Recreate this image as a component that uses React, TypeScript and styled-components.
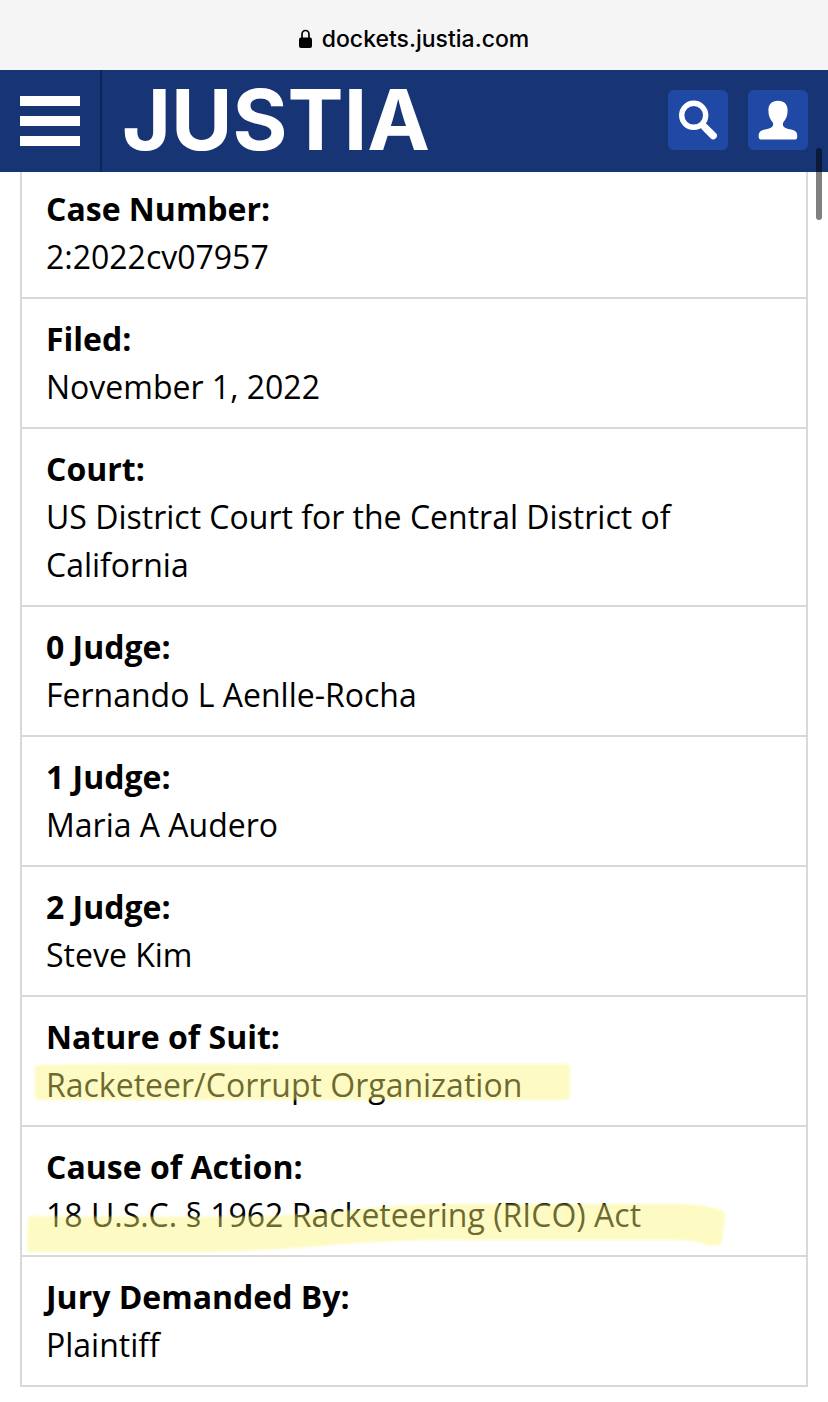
import React from "react";
import styled, { createGlobalStyle } from "styled-components";

const GlobalStyle = createGlobalStyle`
  *, *::before, *::after { box-sizing: border-box; }
  body {
    margin: 0;
    background: #fff;
    color: #000;
    font-family: "Open Sans", "Noto Sans", sans-serif;
  }
`;

const AddressBar = styled.div`
  display: flex;
  align-items: center;
  justify-content: center;
  gap: 10px;
  height: 70px;
  padding-top: 8px;
  background: #f5f5f6;
  font: 500 23px/32px Inter, "Liberation Sans", sans-serif;
`;

const Header = styled.header`
  display: flex;
  align-items: flex-start;
  height: 102px;
  background: #173475;
  color: #fff;
`;

const MenuButton = styled.button`
  display: flex;
  flex-direction: column;
  justify-content: center;
  gap: 10px;
  width: 102px;
  height: 100%;
  padding: 0 20px;
  border: 0;
  border-right: 2px solid #0f2555;
  background: none;
`;

const MenuBar = styled.span`
  display: block;
  height: 10px;
  background: #fff;
`;

const Logo = styled.a`
  margin-left: 20px;
  color: #fff;
  font: 700 84px/100px Inter, "Liberation Sans", sans-serif;
  text-decoration: none;
`;

const Actions = styled.div`
  display: flex;
  gap: 20px;
  margin-left: auto;
  padding: 20px 20px 0 0;
`;

const IconButton = styled.button`
  width: 60px;
  height: 60px;
  padding: 0;
  border: 0;
  border-radius: 6px;
  background: #2049a5;
  color: #fff;

  svg { display: block; }
`;

const CaseDetails = styled.dl`
  margin: 0 20px 15px;
  border: 2px solid #d9d9d9;
  border-top: 0;
`;

const Detail = styled.div`
  padding: 16px 24px;
  font-size: 32px;
  line-height: 48px;

  &:first-child { padding-top: 13px; }
  & + & { border-top: 2px solid #d9d9d9; }
`;

const Label = styled.dt`
  font-weight: 700;
`;

const Value = styled.dd`
  position: relative;
  margin: 0;
`;

const Highlight = styled.svg`
  position: absolute;
  left: -24px;
  top: 2px;
  overflow: visible;
  fill: rgba(251, 246, 116, 0.43);
  filter: blur(1px);
  pointer-events: none;
`;

const ScrollThumb = styled.div`
  position: absolute;
  top: 148px;
  right: 6px;
  width: 6px;
  height: 72px;
  border-radius: 3px;
  background: rgba(0, 0, 0, 0.5);
`;

/* Marker strokes, drawn from the inner left edge of the row. */
const suitStroke = "M15 2Q100 0 250 1H543Q548 1 548 6V32Q548 37 543 37H17Q13 37 13 33V6Q13 2 15 2Z";
const causeStroke =
  "M9 23Q160 24 230 23Q300 21 345 15Q390 11 430 11H660Q688 12 701 18Q704 20 703 26L700 48Q699 53 694 53Q686 53 675 49Q665 47 650 47H420Q350 48 300 53Q240 58 180 59H10Q4 60 5 54L6 27Q6 23 9 23Z";

const details: { label: string; value: string; stroke?: string }[] = [
  { label: "Case Number:", value: "2:2022cv07957" },
  { label: "Filed:", value: "November 1, 2022" },
  { label: "Court:", value: "US District Court for the Central District of California" },
  { label: "0 Judge:", value: "Fernando L Aenlle-Rocha" },
  { label: "1 Judge:", value: "Maria A Audero" },
  { label: "2 Judge:", value: "Steve Kim" },
  { label: "Nature of Suit:", value: "Racketeer/Corrupt Organization", stroke: suitStroke },
  { label: "Cause of Action:", value: "18 U.S.C. § 1962 Racketeering (RICO) Act", stroke: causeStroke },
  { label: "Jury Demanded By:", value: "Plaintiff" },
];

const LockIcon = () => (
  <svg width="13" height="20" viewBox="0 0 13 20" aria-hidden="true">
    <path d="M3 9V5.5a3.5 4 0 0 1 7 0V9" fill="none" stroke="#000" strokeWidth="1.7" />
    <rect x="0" y="8.5" width="13" height="10.5" rx="2" />
  </svg>
);

const SearchIcon = () => (
  <svg width="60" height="60" viewBox="0 0 60 60" fill="none" stroke="currentColor" aria-hidden="true">
    <circle cx="25.7" cy="25.3" r="12" strokeWidth="5.4" />
    <path d="M34 34.5L37 37.5" strokeWidth="5" />
    <path d="M37 37.5L45.2 45.7" strokeWidth="7.4" strokeLinecap="round" />
  </svg>
);

const UserIcon = () => (
  <svg width="60" height="60" viewBox="0 0 60 60" fill="currentColor" aria-hidden="true">
    <path d="M30 10.8C23.8 10.8 20.4 14.5 20.4 20.3C20.4 25.5 21.8 29.2 24.8 32.4C25.7 34.8 24.8 36.8 22.3 37.9C19 39.4 14.4 39.4 12.2 41.4C10.8 42.8 10.5 44.8 10.7 47.2C10.8 48.9 11.8 49.6 13.4 49.6H46.6C48.2 49.6 49.1 48.9 49.2 47.2C49.4 44.8 49.1 42.8 47.7 41.4C45.4 39.4 41 39.4 37.6 37.9C35.1 36.8 34.3 34.8 35.2 32.4C38.2 29.2 39.6 25.5 39.6 20.3C39.6 14.5 36.2 10.8 30 10.8Z" />
  </svg>
);

export default function App() {
  return (
    <>
      <GlobalStyle />
      <AddressBar>
        <LockIcon />
        <span>dockets.justia.com</span>
      </AddressBar>
      <Header>
        <MenuButton aria-label="Menu">
          <MenuBar />
          <MenuBar />
          <MenuBar />
        </MenuButton>
        <Logo href="#">JUSTIA</Logo>
        <Actions>
          <IconButton aria-label="Search"><SearchIcon /></IconButton>
          <IconButton aria-label="Account"><UserIcon /></IconButton>
        </Actions>
      </Header>
      <main>
        <CaseDetails>
          {details.map(({ label, value, stroke }) => (
            <Detail key={label}>
              <Label>{label}</Label>
              <Value>
                {value}
                {stroke && (
                  <Highlight width="710" height="60" viewBox="0 0 710 60" aria-hidden="true">
                    <path d={stroke} />
                  </Highlight>
                )}
              </Value>
            </Detail>
          ))}
        </CaseDetails>
      </main>
      <ScrollThumb />
    </>
  );
}
